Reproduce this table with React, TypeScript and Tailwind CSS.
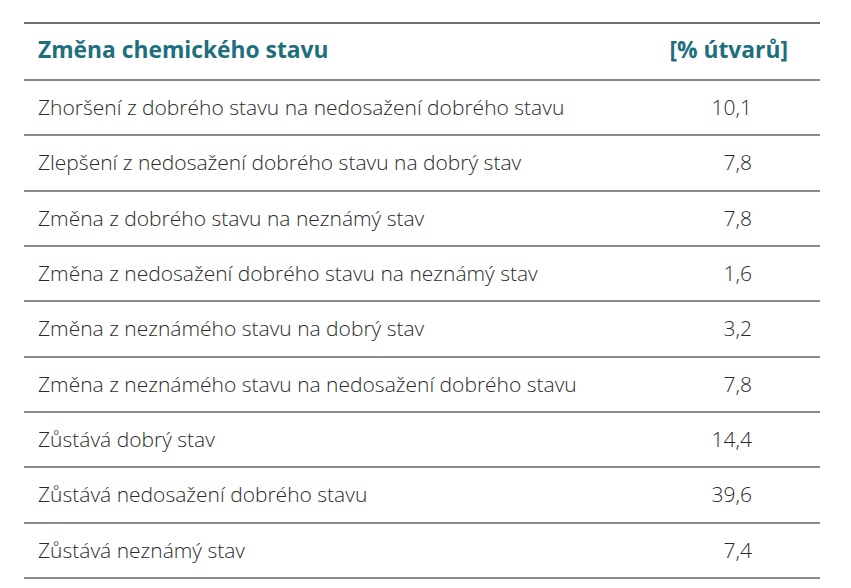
import React from "react";

type Row = { label: string; value: string; h: string };

const rows: Row[] = [
  { label: "Zhoršení z dobrého stavu na nedosažení dobrého stavu", value: "10,1", h: "h-[55px]" },
  { label: "Zlepšení z nedosažení dobrého stavu na dobrý stav", value: "7,8", h: "h-[56px]" },
  { label: "Změna z dobrého stavu na neznámý stav", value: "7,8", h: "h-[55px]" },
  { label: "Změna z nedosažení dobrého stavu na neznámý stav", value: "1,6", h: "h-[55px]" },
  { label: "Změna z neznámého stavu na dobrý stav", value: "3,2", h: "h-[56px]" },
  { label: "Změna z neznámého stavu na nedosažení dobrého stavu", value: "7,8", h: "h-[55px]" },
  { label: "Zůstává dobrý stav", value: "14,4", h: "h-[55px]" },
  { label: "Zůstává nedosažení dobrého stavu", value: "39,6", h: "h-[56px]" },
  { label: "Zůstává neznámý stav", value: "7,4", h: "h-[55px]" },
];

export default function App() {
  return (
    <div className="w-[851px] h-[588px] bg-white pt-[22px] pl-[24px] font-['Open_Sans',sans-serif]">
      <div className="w-[796px] border-b-2 border-[#8a8a8a]">
        {/* Header */}
        <div className="h-[57px] border-t-2 border-[#6f6f6f] flex items-center justify-between pl-[14px] pr-[32px] pb-[2px]">
          <span className="text-[22.8px] font-bold text-[#1d6f7e]">Změna chemického stavu</span>
          <span className="text-[22.8px] font-bold text-[#1d6f7e]">[% útvarů]</span>
        </div>

        {/* Rows */}
        {rows.map((r, i) => (
          <div
            key={i}
            className={`${r.h} border-t-2 border-[#8a8a8a] flex items-center justify-between pl-[14px] pr-[68px]`}
          >
            <span className="text-[21px] font-light text-[#2b2b2b]">{r.label}</span>
            <span className="text-[21px] font-light text-[#2b2b2b]">{r.value}</span>
          </div>
        ))}
      </div>
    </div>
  );
}
